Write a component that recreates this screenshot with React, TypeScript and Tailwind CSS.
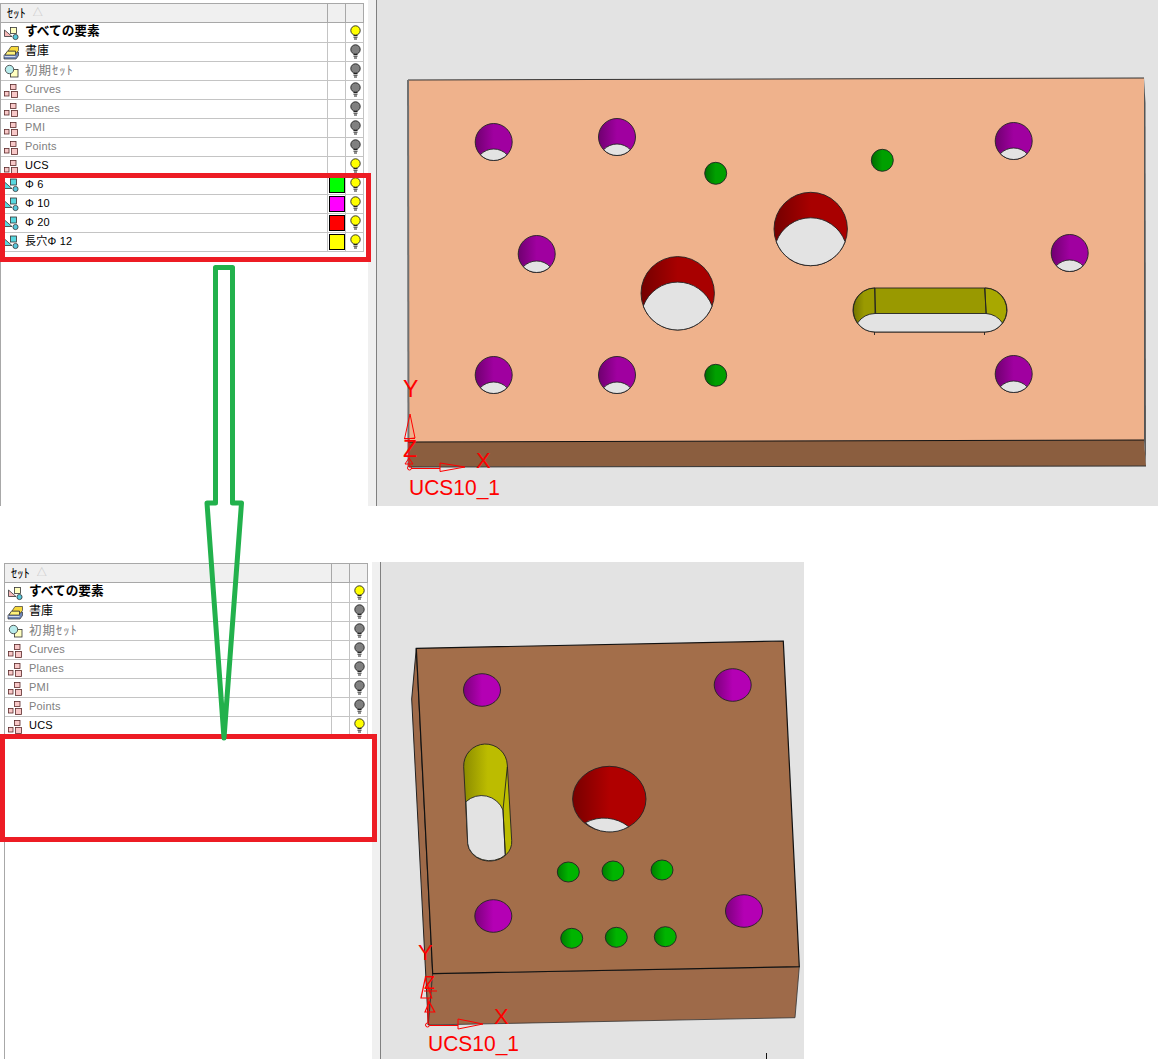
import React from 'react';

type RowKind = 'all' | 'library' | 'initial' | 'group' | 'custom';

type SetRow = {
  name: string;
  kind: RowKind;
  on: boolean;
  muted?: boolean;
  bold?: boolean;
  color?: string;
};

const baseRows: SetRow[] = [
  { name: 'すべての要素', kind: 'all', on: true, bold: true },
  { name: '書庫', kind: 'library', on: false },
  { name: '初期ｾｯﾄ', kind: 'initial', on: false, muted: true },
  { name: 'Curves', kind: 'group', on: false, muted: true },
  { name: 'Planes', kind: 'group', on: false, muted: true },
  { name: 'PMI', kind: 'group', on: false, muted: true },
  { name: 'Points', kind: 'group', on: false, muted: true },
  { name: 'UCS', kind: 'group', on: true },
];

const customRows: SetRow[] = [
  { name: 'Φ 6', kind: 'custom', on: true, color: 'bg-[#00ff00]' },
  { name: 'Φ 10', kind: 'custom', on: true, color: 'bg-[#ff00ff]' },
  { name: 'Φ 20', kind: 'custom', on: true, color: 'bg-[#ff0000]' },
  { name: '長穴Φ 12', kind: 'custom', on: true, color: 'bg-[#ffff00]' },
];

function nameClass(row: SetRow) {
  if (row.bold) return 'text-[12.7px] font-bold';
  if (row.kind === 'library') return 'text-[12px]';
  if (row.kind === 'initial') return "text-[12.5px] tracking-[1px] [font-family:'Noto_Sans_CJK_JP',sans-serif]";
  return 'text-[11px] tracking-[0.2px]';
}

function RowIcon({ kind }: { kind: RowKind }) {
  return (
    <svg width="20" height="18" viewBox="0 0 20 18" className="shrink-0">
      {kind === 'all' && (
        <g stroke="#333" strokeWidth="0.8">
          <path d="M2.5 6 L2.5 12.5 L10 12.5 Z" fill="#f8b8b8" />
          <rect x="8.5" y="3.5" width="6" height="6" fill="#ffffc0" />
          <circle cx="13.5" cy="13" r="2.6" fill="#58c8dc" />
        </g>
      )}
      {kind === 'custom' && (
        <g stroke="#333" strokeWidth="0.8">
          <path d="M2.5 6 L2.5 12.5 L10 12.5 Z" fill="#58d8e0" />
          <rect x="8.5" y="3" width="6" height="6" fill="#58d8e0" />
          <circle cx="13.5" cy="13" r="2.6" fill="#58c8dc" />
        </g>
      )}
      {kind === 'group' && (
        <g stroke="#5a2a2a" strokeWidth="0.8" fill="#f8c8c8">
          <rect x="8.5" y="3.5" width="5.5" height="5" />
          <rect x="2.5" y="10.5" width="4.5" height="4.5" />
          <rect x="9.5" y="10.5" width="6" height="6" />
        </g>
      )}
      {kind === 'initial' && (
        <g stroke="#333" strokeWidth="0.8">
          <rect x="8.5" y="7.5" width="7.5" height="7.5" fill="#ffffc0" />
          <circle cx="7.5" cy="7.5" r="4.2" fill="#b8ecec" />
        </g>
      )}
      {kind === 'library' && (
        <g stroke="#333" strokeWidth="0.7">
          <path d="M2 12.5 L5 9 L16.5 9 L16.5 12.5 L14 16 L2 16 Z" fill="#6f86b8" />
          <path d="M3 12 L5.5 8 L13.5 8 L13.5 12 Z" fill="#fff27a" />
          <path d="M6 8 L9 3.5 L16.5 3.5 L16.5 7.5 L13.5 11 L13.5 8 Z" fill="#f6d83c" />
          <path d="M2.5 13.5 H13.5" stroke="#fff" fill="none" />
        </g>
      )}
    </svg>
  );
}

function Bulb({ on }: { on: boolean }) {
  return (
    <svg width="11" height="16" viewBox="0 0 11 16">
      <circle cx="5.5" cy="5.5" r="4.7" fill={on ? '#ffff00' : '#808080'} stroke="#222" strokeWidth="0.9" />
      <path d="M3.5 10.5 H7.5 M3.5 12.2 H7.5 M4 14 H7" stroke="#222" strokeWidth="1" fill="none" />
    </svg>
  );
}

function SetList({ rows, className }: { rows: SetRow[]; className: string }) {
  return (
    <div className={`w-[368px] shrink-0 bg-white ${className}`}>
      <div className="h-full w-[364px] border-l border-[#a8a8a8] [font-family:'Liberation_Sans','Noto_Sans_CJK_JP',sans-serif]">
        <div className="flex h-5 border-y border-r border-[#a8a8a8] bg-[#f0f0f0] text-black">
          <div className="flex flex-1 items-center gap-[7px] pl-[6px]">
            <span className="text-[12.5px] leading-none [font-family:'Noto_Sans_CJK_JP',sans-serif]">ｾｯﾄ</span>
            <span className="text-[10px] leading-none text-[#c4c4c4]">△</span>
          </div>
          <div className="w-[18px] border-l border-[#a8a8a8]" />
          <div className="w-[18px] border-l border-[#a8a8a8]" />
        </div>
        {rows.map((row, index) => (
          <div
            key={row.name}
            className={`flex items-center border-r border-b border-[#c4c4c4] ${index === 0 ? 'h-5' : 'h-[19px]'}`}
          >
            <div className="flex min-w-0 flex-1 items-center gap-[3px] pl-[1px]">
              <RowIcon kind={row.kind} />
              <span
                className={`mb-[2px] whitespace-nowrap leading-none ${row.muted ? 'text-[#808080]' : 'text-black'} ${nameClass(row)}`}
              >
                {row.name}
              </span>
            </div>
            <div className="flex h-full w-[18px] items-center justify-center border-l border-[#c4c4c4]">
              {row.color && <div className={`h-4 w-4 border border-black ${row.color}`} />}
            </div>
            <div className="flex h-full w-[18px] items-center justify-center border-l border-[#c4c4c4] pl-[1px]">
              <Bulb on={row.on} />
            </div>
          </div>
        ))}
      </div>
    </div>
  );
}

function Sash() {
  return (
    <div className="flex w-[9px] shrink-0">
      <div className="w-[8px] bg-[#f0f0f0]" />
      <div className="w-[1px] bg-[#808080]" />
    </div>
  );
}

function Gradients({ prefix, bright }: { prefix: string; bright: boolean }) {
  const stops: [string, string, string][] = bright
    ? [
        ['purple', '#7c007c', '#b400b4'],
        ['red', '#780000', '#b00000'],
        ['green', '#007c00', '#00b400'],
        ['yellow', '#8c8c00', '#bcbc00'],
      ]
    : [
        ['purple', '#700070', '#a000a0'],
        ['red', '#740000', '#a80000'],
        ['green', '#006c00', '#00a000'],
        ['yellow', '#747400', '#9a9a00'],
      ];
  return (
    <defs>
      {stops.map(([name, dark, light]) => (
        <linearGradient key={name} id={`${prefix}-${name}`} x1="0" x2="1" y1="0" y2="0">
          <stop offset="0" stopColor={dark} />
          <stop offset="0.5" stopColor={light} />
          <stop offset="1" stopColor={light} />
        </linearGradient>
      ))}
    </defs>
  );
}

// through hole seen at an angle: the far edge shows as a shifted circle
function Hole({ cx, cy, r, fill }: { cx: number; cy: number; r: number; fill: string }) {
  const half = 12.75;
  const w = Math.sqrt(r * r - half * half);
  return (
    <g stroke="#222" strokeWidth="0.9">
      <circle cx={cx} cy={cy} r={r} fill={fill} />
      <path
        d={`M${cx - w} ${cy + half} A${r} ${r} 0 0 1 ${cx + w} ${cy + half} A${r} ${r} 0 0 1 ${cx - w} ${cy + half} Z`}
        fill="#e3e3e3"
      />
    </g>
  );
}

function Dot({ cx, cy, rx, ry, fill }: { cx: number; cy: number; rx: number; ry: number; fill: string }) {
  return <ellipse cx={cx} cy={cy} rx={rx} ry={ry} fill={fill} stroke="#222" strokeWidth="0.9" />;
}

function AxisLabel({ x, y, size, width, children }: { x: number; y: number; size: number; width?: number; children: string }) {
  return (
    <text
      x={x}
      y={y}
      fontSize={size}
      fill="#ff0000"
      fontFamily="'Liberation Sans', sans-serif"
      textLength={width}
      lengthAdjust={width ? 'spacingAndGlyphs' : undefined}
    >
      {children}
    </text>
  );
}

function TopModel() {
  const purple = [
    [493.7, 142],
    [617, 137],
    [536.7, 254],
    [493.7, 375],
    [617, 375],
    [1013.7, 141],
    [1069.7, 253],
    [1013.7, 374],
  ];
  const green = [
    [715.7, 173.3],
    [715.7, 375.3],
    [882.3, 160.3],
  ];
  return (
    <svg viewBox="377 0 781 506" width="781" height="506" className="block">
      <Gradients prefix="top" bright={false} />
      <path d="M408 80 L1144 78 L1144 440 L408 442 Z" fill="#efb28c" />
      <path d="M408 442 L1144 440 L1146 466 L409 467 Z" fill="#8b5e3f" />
      <path d="M408 80 L1144 78" stroke="#333" fill="none" />
      <path d="M408 80 L408.5 467" stroke="#707070" strokeWidth="2" fill="none" />
      <path d="M408 442 L1144 440" stroke="#111" fill="none" />
      <path d="M409 467 L1146 466" stroke="#333" fill="none" />
      <path d="M1144 78 L1145.5 103 L1146 466 L1144 440 Z" fill="#555" />
      {purple.map(([cx, cy]) => (
        <Hole key={`${cx}-${cy}`} cx={cx} cy={cy} r={18.5} fill="url(#top-purple)" />
      ))}
      {green.map(([cx, cy]) => (
        <circle key={`${cx}-${cy}`} cx={cx} cy={cy} r={11} fill="url(#top-green)" stroke="#222" strokeWidth="0.9" />
      ))}
      <Hole cx={677.7} cy={293.3} r={36.7} fill="url(#top-red)" />
      <Hole cx={810.7} cy={229} r={36.7} fill="url(#top-red)" />
      <g stroke="#222" strokeWidth="0.9">
        <path d="M875 288 L985 288 A22 22 0 0 1 985 332 L875 332 A22 22 0 0 1 875 288 Z" fill="#999900" />
        <path d="M875 288 A22 22 0 0 0 857.5 323 L875 313.5 Z" fill="url(#top-yellow)" />
        <path d="M985 288 A22 22 0 0 1 1002.5 323 L986 313.5 Z" fill="#a8a800" />
        <path d="M857.5 323 A22 22 0 0 1 875 313.5 L986 313.5 A22 22 0 0 1 1002.5 323 A22 22 0 0 1 985 332 L875 332 A22 22 0 0 1 857.5 323 Z" fill="#e3e3e3" />
        <path d="M874.5 288 L875.7 313.5 M984.5 288 L986.3 313.5 M874.5 332 V335 M984.5 332 V335" fill="none" />
      </g>
      <g stroke="#ff0000" fill="none">
        <circle cx="409.5" cy="468" r="2" />
        <path d="M409 466 V439 M410 414 L404.5 439 L415 438 Z M404 438.5 H415" />
        <path d="M405 464 L409 458 L413 464 Z M411 468.5 H440 M440 463 L465 467 L440 471.5 Z" />
      </g>
      <AxisLabel x={403} y={457} size={23}>Z</AxisLabel>
      <AxisLabel x={403} y={397} size={23}>Y</AxisLabel>
      <AxisLabel x={476} y={468} size={22}>X</AxisLabel>
      <AxisLabel x={409} y={495} size={22.5} width={91}>UCS10_1</AxisLabel>
    </svg>
  );
}

function BottomModel() {
  const purple = [
    [482, 690],
    [732.7, 685],
    [493.3, 916],
    [744, 911],
  ];
  const green = [
    [568.3, 872],
    [613, 871],
    [662, 870],
    [571.7, 938.3],
    [616.3, 937.3],
    [665.3, 936.7],
  ];
  return (
    <svg viewBox="381 562 423 497" width="423" height="497" className="block">
      <Gradients prefix="bottom" bright />
      <path d="M416.3 648.3 L411.7 699 L428.3 1025 L432.7 973.7 Z" fill="#9e6a49" stroke="#222" />
      <path d="M432.7 973.7 L799.3 966.7 L795 1017.7 L428.3 1025 Z" fill="#9e6a49" stroke="#333" strokeWidth="0.8" />
      <path d="M416.3 648.3 L783.3 641 L799.3 966.7 L432.7 973.7 Z" fill="#a36e4a" stroke="#111" strokeWidth="1.2" />
      {purple.map(([cx, cy]) => (
        <Dot key={`${cx}-${cy}`} cx={cx} cy={cy} rx={18.5} ry={16.3} fill="url(#bottom-purple)" />
      ))}
      {green.map(([cx, cy]) => (
        <Dot key={`${cx}-${cy}`} cx={cx} cy={cy} rx={11} ry={10} fill="url(#bottom-green)" />
      ))}
      <Dot cx={609.3} cy={799} rx={36.7} ry={32.7} fill="url(#bottom-red)" />
      <path d="M585.3 822.7 A40 40 0 0 1 628.7 826.7 A36.8 36.8 0 0 1 585.3 822.7 Z" fill="#e3e3e3" stroke="#222" strokeWidth="0.9" />
      <g stroke="#222" strokeWidth="0.9">
        <path d="M463.7 766.7 A21.8 21.8 0 0 1 507.3 765 L511.7 840.7 A22 19 0 0 1 467.7 843.3 Z" fill="url(#bottom-yellow)" />
        <path d="M466 801.7 A23 23 0 0 1 503 810 L505.3 855 A22 19 0 0 1 467.7 843.3 Z" fill="#e3e3e3" />
        <path d="M507.3 767 L503 810 L505.3 855" fill="none" />
      </g>
      <path d="M766.5 1053 V1059" stroke="#111" fill="none" />
      <g stroke="#ff0000" fill="none">
        <circle cx="427.5" cy="1025" r="2" />
        <path d="M428 1023 V998 M425.3 978 L421 998 L431.7 998 Z M425 1012 L429.3 1002 L434.7 1012 Z M424 991 H437" strokeWidth="1.2" />
        <path d="M430 1025.5 H458 M458 1019 L483 1024 L458 1029 Z" />
      </g>
      <AxisLabel x={424} y={989} size={18}>Z</AxisLabel>
      <AxisLabel x={418} y={960} size={22}>Y</AxisLabel>
      <AxisLabel x={494} y={1024} size={22}>X</AxisLabel>
      <AxisLabel x={428} y={1051} size={22.5} width={91}>UCS10_1</AxisLabel>
    </svg>
  );
}

export default function App() {
  return (
    <div className="relative h-[1062px] w-[1158px] overflow-hidden bg-white">
      <div className="flex h-[506px]">
        <SetList rows={[...baseRows, ...customRows]} className="pt-[3px]" />
        <Sash />
        <div className="flex-1 bg-[#e3e3e3]">
          <TopModel />
        </div>
      </div>
      <div className="mt-[56px] flex h-[497px] w-[804px]">
        <SetList rows={baseRows} className="ml-[4px] pt-[1px]" />
        <Sash />
        <div className="flex-1 bg-[#e3e3e3]">
          <BottomModel />
        </div>
      </div>

      {/* annotations drawn over the screenshots */}
      <div className="absolute left-0 top-[173px] h-[89px] w-[371px] border-[5px] border-[#ed1c24]" />
      <div className="absolute left-0 top-[734px] h-[108px] w-[377px] border-[5px] border-[#ed1c24]" />
      <svg className="absolute left-0 top-0" width="300" height="760" viewBox="0 0 300 760">
        <path
          d="M215.5 267.5 H232.5 V503 H241.5 L224 738 L207 503 H215.5 Z"
          fill="none"
          stroke="#22b14c"
          strokeWidth="5"
          strokeLinejoin="round"
        />
      </svg>
    </div>
  );
}
